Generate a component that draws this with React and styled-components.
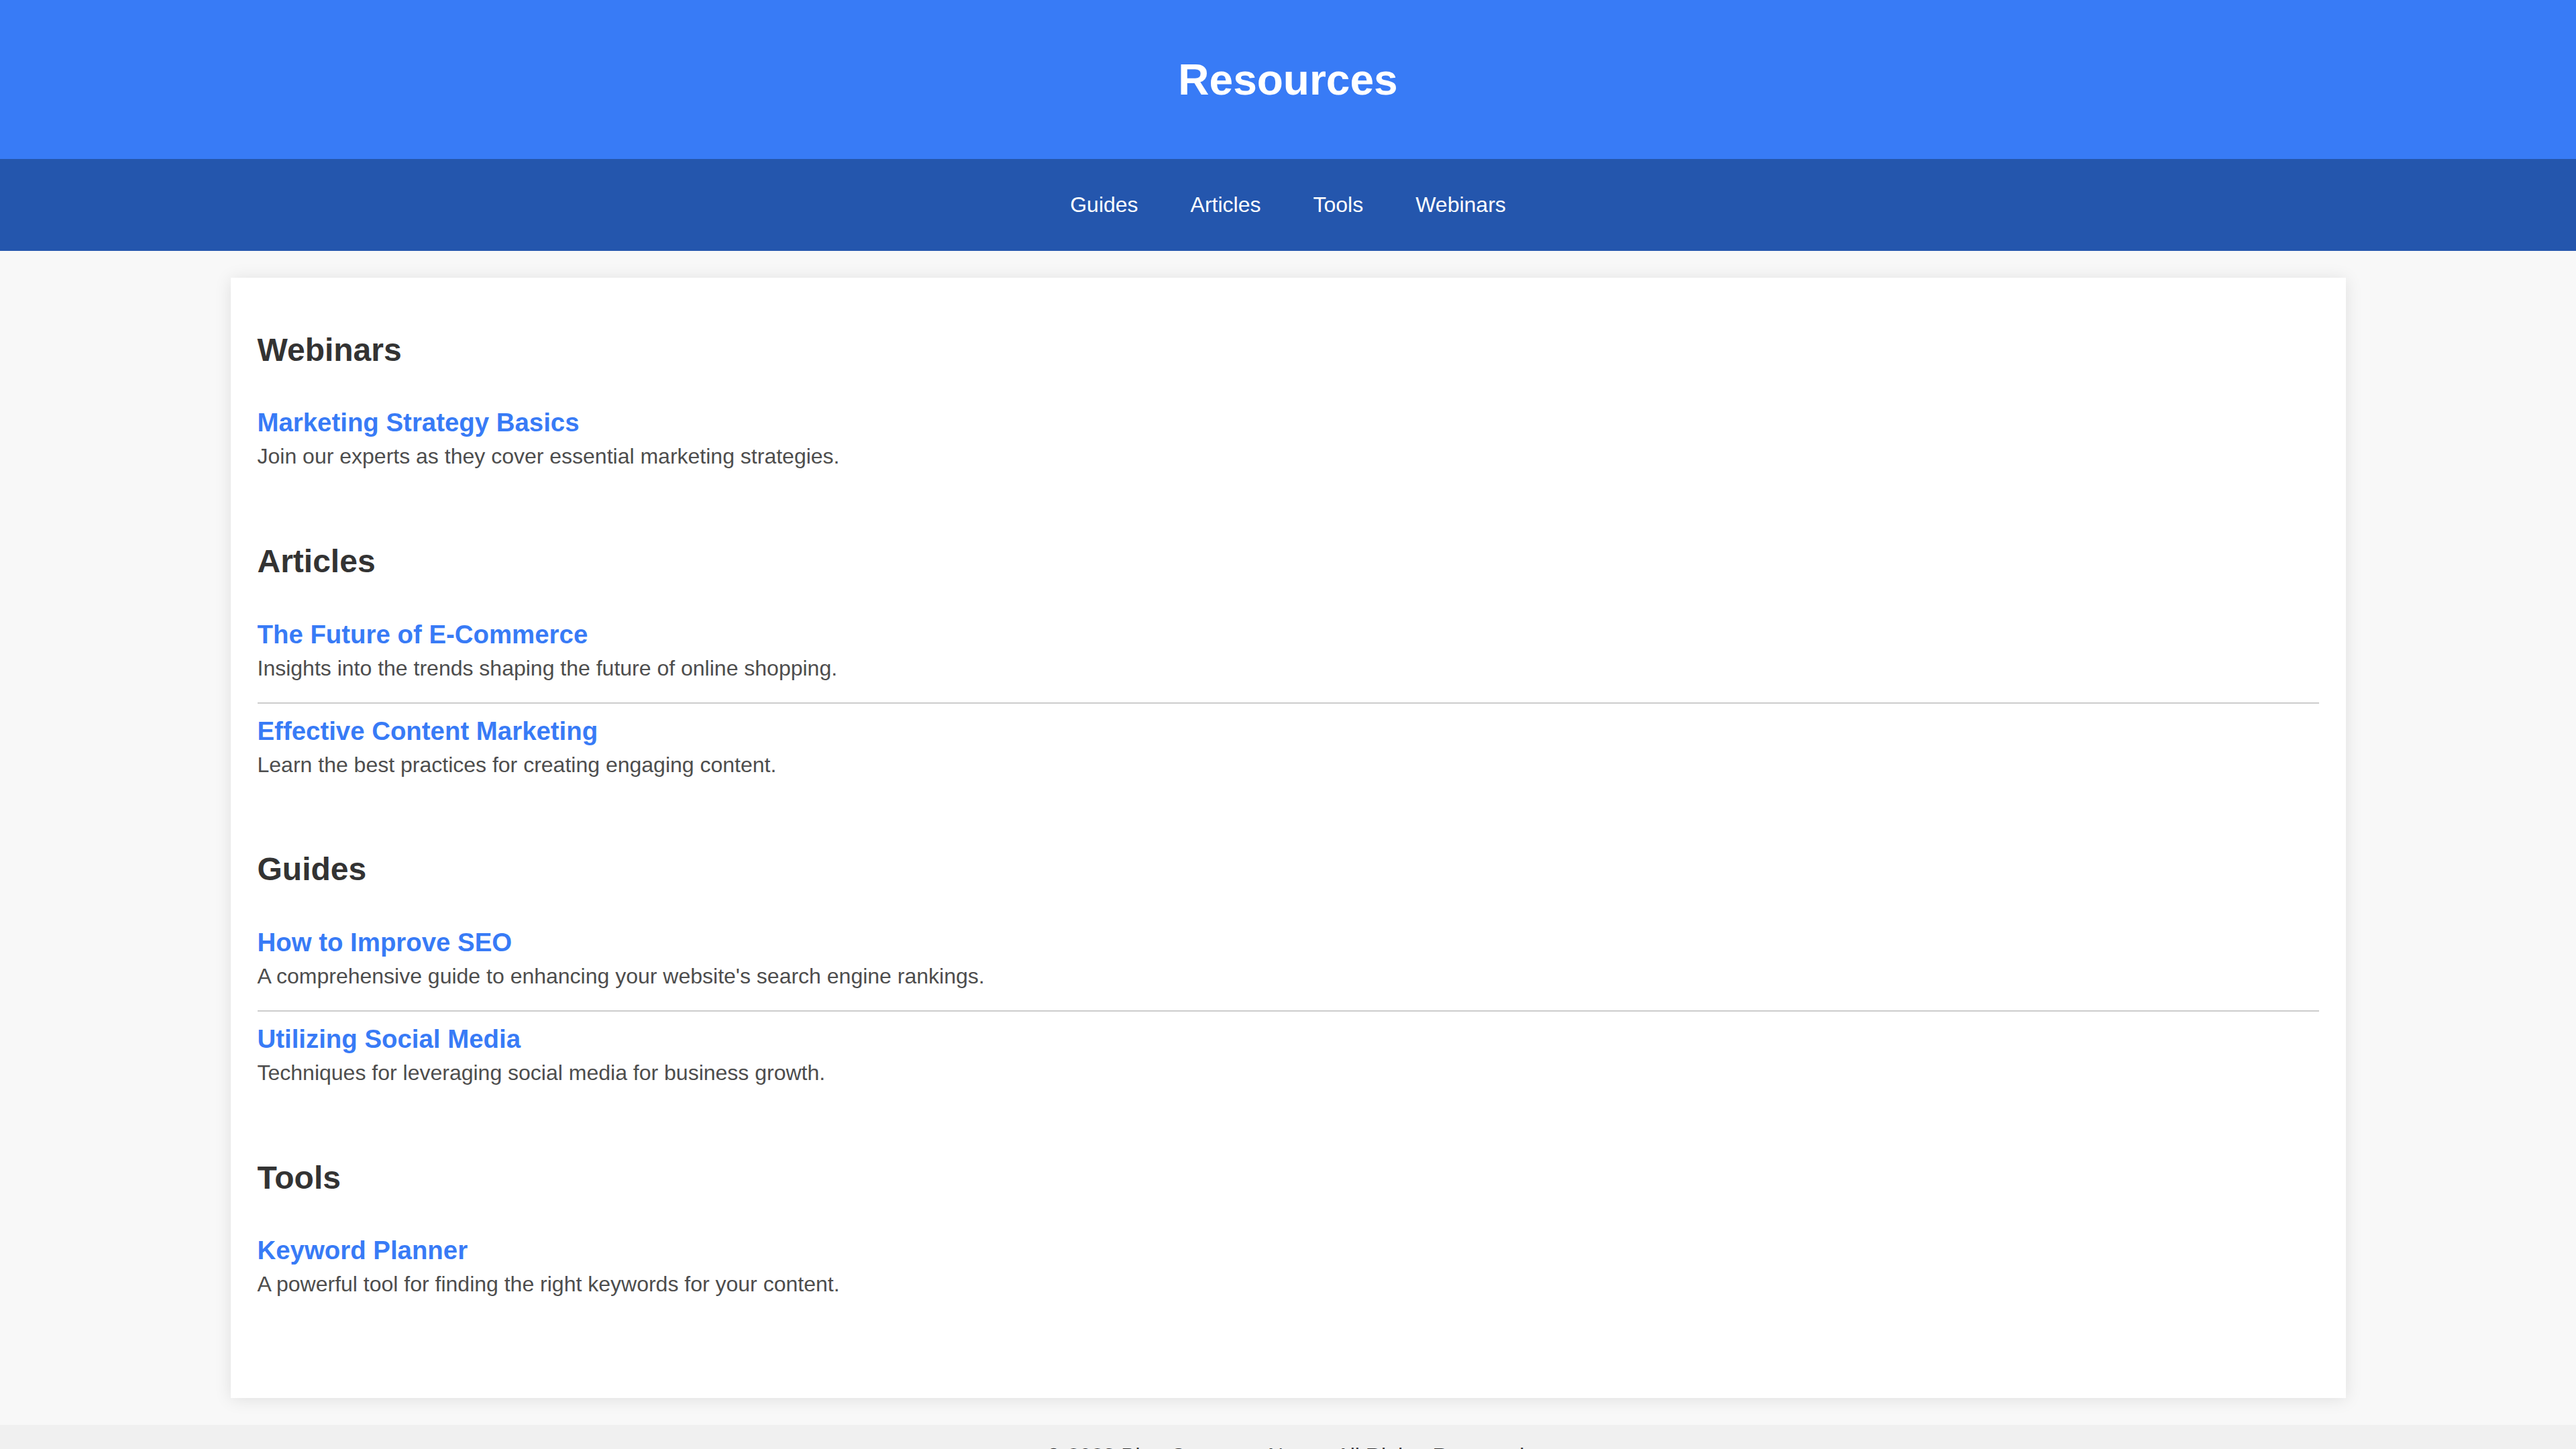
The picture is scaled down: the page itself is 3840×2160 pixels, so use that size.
import styled, { createGlobalStyle } from "styled-components";

const GlobalStyle = createGlobalStyle`
    html, body {
        margin: 0;
        padding: 0;
        background: #f8f8f8;
        font-family: "Liberation Sans", Arial, sans-serif;
        color: #333;
    }
    * {
        box-sizing: border-box;
    }
`

const Header = styled.header`
    height: 237px;
    background: #387bf6;
    display: flex;
    align-items: center;
    justify-content: center;
`

const Title = styled.h1`
    margin: 0;
    font-size: 64px;
    line-height: 74px;
    font-weight: 700;
    color: #fff;
`

const Nav = styled.nav`
    height: 137px;
    background: #2456ad;
    display: flex;
    align-items: center;
    justify-content: center;
    gap: 78px;
`

const NavLink = styled.a`
    color: #fff;
    text-decoration: none;
    font-size: 32px;
    line-height: 37px;
`

const Card = styled.main`
    max-width: 3153px;
    margin: 40px auto;
    background: #fff;
    padding: 40px 40px 81px;
    box-shadow: 0 2px 24px rgba(0, 0, 0, 0.1);
    display: flex;
    flex-direction: column;
`

const Section = styled.section`
    display: flex;
    flex-direction: column;
    margin-bottom: 38px;
`

const SectionTitle = styled.h2`
    margin: 39.84px 0 38.5px;
    font-size: 48px;
    line-height: 56px;
    font-weight: 700;
    color: #333;
`

const Item = styled.article`
    padding: 20px 0 32px;
    border-bottom: ${(p) => (p.$last ? "none" : "2px solid #cccccc")};
    &:not(:first-of-type) {
        padding-top: 19px;
    }
`

const ItemTitle = styled.a`
    display: block;
    margin-bottom: 10px;
    font-size: 38.4px;
    line-height: 44px;
    font-weight: 700;
    color: #387bf6;
    text-decoration: none;
`

const ItemText = styled.p`
    margin: 0;
    font-size: 32px;
    line-height: 37px;
    color: #4d4d4d;
`

const Footer = styled.footer`
    background: #f0f0f0;
    padding: 28px 0;
    text-align: center;
    font-size: 32px;
    line-height: 37px;
    color: #333;
`

const sections = [
    {
        name: "Webinars",
        items: [
            { title: "Marketing Strategy Basics", text: "Join our experts as they cover essential marketing strategies." },
        ],
    },
    {
        name: "Articles",
        items: [
            { title: "The Future of E-Commerce", text: "Insights into the trends shaping the future of online shopping." },
            { title: "Effective Content Marketing", text: "Learn the best practices for creating engaging content." },
        ],
    },
    {
        name: "Guides",
        items: [
            { title: "How to Improve SEO", text: "A comprehensive guide to enhancing your website's search engine rankings." },
            { title: "Utilizing Social Media", text: "Techniques for leveraging social media for business growth." },
        ],
    },
    {
        name: "Tools",
        items: [
            { title: "Keyword Planner", text: "A powerful tool for finding the right keywords for your content." },
        ],
    },
];

const App = () => {
    const links = ["Guides", "Articles", "Tools", "Webinars"];
    return (
        <>
            <GlobalStyle />
            <Header>
                <Title>Resources</Title>
            </Header>
            <Nav>
                {links.map((link) => (
                    <NavLink key={link} href={`#${link.toLowerCase()}`}>{link}</NavLink>
                ))}
            </Nav>
            <Card>
                {sections.map((section) => (
                    <Section key={section.name} id={section.name.toLowerCase()}>
                        <SectionTitle>{section.name}</SectionTitle>
                        {section.items.map((item, i) => (
                            <Item key={item.title} $last={i === section.items.length - 1}>
                                <ItemTitle href="#">{item.title}</ItemTitle>
                                <ItemText>{item.text}</ItemText>
                            </Item>
                        ))}
                    </Section>
                ))}
            </Card>
            <Footer>© 2023 Blog Company Name. All Rights Reserved.</Footer>
        </>
    )
}

export default App;
